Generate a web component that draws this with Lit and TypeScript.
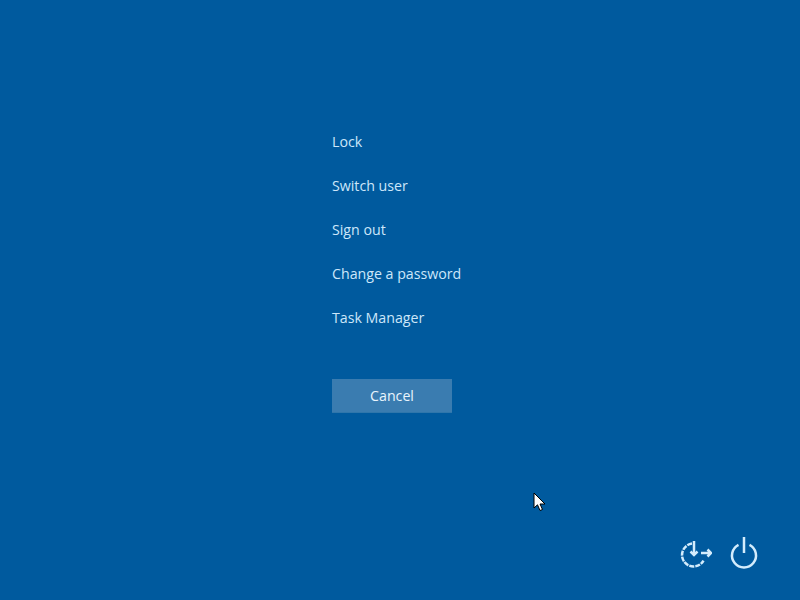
import { LitElement, html, css, svg } from "lit";
import { customElement } from "lit/decorators.js";

const ITEMS = ["Lock", "Switch user", "Sign out", "Change a password", "Task Manager"];

@customElement("app-root")
export class AppRoot extends LitElement {
  static styles = css`
    :host {
      display: block;
      width: 800px;
      height: 600px;
      position: relative;
      overflow: hidden;
      background: #005a9e;
      font-family: "Open Sans", "Noto Sans", sans-serif;
      color: #cde7fa;
    }
    .page {
      height: 600px;
      box-sizing: border-box;
      display: flex;
      flex-direction: column;
      padding: 120px 0 0 332px;
    }
    .menu {
      display: flex;
      flex-direction: column;
      align-items: flex-start;
    }
    .item {
      height: 44px;
      line-height: 44px;
      font-size: 14.2px;
    }
    .cancel {
      margin-top: 39px;
      width: 120px;
      height: 34px;
      box-sizing: border-box;
      border: 0;
      border-bottom: 1px solid #2f76ab;
      background: #3a7cb0;
      color: #e9f5fd;
      font: inherit;
      font-size: 14.2px;
      padding: 0;
    }
    .power {
      margin-top: auto;
      align-self: flex-end;
      display: flex;
      gap: 16px;
      padding: 0 38px 30px 0;
    }
    .power svg {
      display: block;
      width: 34px;
      height: 34px;
      fill: none;
      stroke: #d3ecfc;
      stroke-width: 2.5;
    }
    .cursor {
      position: absolute;
      left: 533px;
      top: 492px;
      width: 14px;
      height: 21px;
    }
  `;

  render() {
    return html`
      <div class="page">
        <div class="menu">
          ${ITEMS.map((t) => html`<div class="item">${t}</div>`)}
        </div>
        <button class="cancel">Cancel</button>
        <div class="power">
          <svg viewBox="0 0 34 34">
            ${svg`<path d="M14 7.600A11.500 11.500 0 1 0 25.500 24.700" stroke-dasharray="5 1"/>
            <path d="M16 5v14"/>
            <path d="M12.500 15.500l3.500 3.500 3.500-3.500"/>
            <path d="M23 17h10M29.500 13.500l3.500 3.500-3.500 3.500"/>`}
          </svg>
          <svg viewBox="0 0 34 34">
            ${svg`<path d="M10.500 8.800A12 12 0 1 0 21.500 8.800"/><path d="M16 1v16"/>`}
          </svg>
        </div>
      </div>
      <svg class="cursor" viewBox="0 0 14 21">
        ${svg`<path d="M1 1v15l3.500-3.200 2.500 5.700 2.500-1-2.500-5.500H12z" fill="#fff" stroke="#000" stroke-width="1"/>`}
      </svg>
    `;
  }
}
